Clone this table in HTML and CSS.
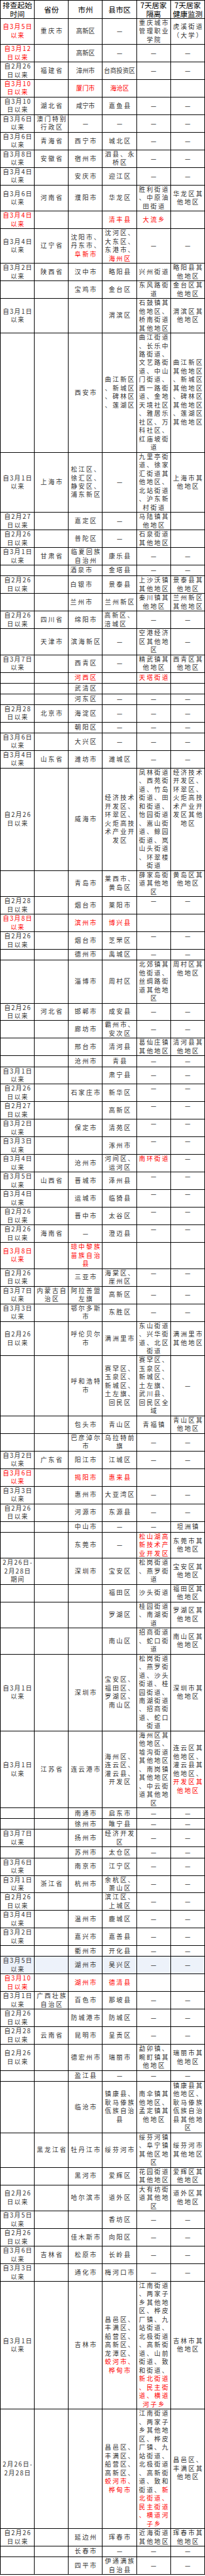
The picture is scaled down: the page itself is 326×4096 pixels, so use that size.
FILE: index.html
```html
<!DOCTYPE html>
<html lang="zh-CN">
<head>
<meta charset="utf-8">
<title>排查起始时间</title>
<link rel="stylesheet" href="styles.css">
</head>
<body>
<table class="sheet">
<colgroup><col><col><col><col><col><col></colgroup>
<thead>
<tr><th>排查起始<br>时间</th><th>省份</th><th>市州</th><th>县市区</th><th>7天居家<br>隔离</th><th>7天居家<br>健康监测</th></tr>
</thead>
<tbody>
<tr><td class="r">自3月5日<br>以来</td><td>重庆市</td><td class="t">高新区</td><td>—</td><td>重庆城市<br>管理职业<br>学院</td><td>虎溪街道<br>（大学）</td></tr>
<tr><td class="r">自3月12<br>日以来</td><td></td><td class="t">高新区</td><td>—</td><td>—</td><td>—</td></tr>
<tr><td>自2月26<br>日以来</td><td>福建省</td><td class="t">漳州市</td><td class="t">台商投资区</td><td>—</td><td>—</td></tr>
<tr><td class="r">自3月10<br>日以来</td><td></td><td class="t r">厦门市</td><td class="t r">海沧区</td><td></td><td></td></tr>
<tr><td>自3月10<br>日以来</td><td>湖北省</td><td class="t">咸宁市</td><td>嘉鱼县</td><td>—</td><td>—</td></tr>
<tr><td>自3月6日<br>以来</td><td>澳门特别<br>行政区</td><td>—</td><td>—</td><td>—</td><td>—</td></tr>
<tr><td>自3月6日<br>以来</td><td>青海省</td><td>西宁市</td><td>城北区</td><td>—</td><td>—</td></tr>
<tr><td>自3月8日<br>以来</td><td>安徽省</td><td>宿州市</td><td>泗县、永<br>桥区</td><td>—</td><td>—</td></tr>
<tr><td>自3月4日<br>以来</td><td></td><td>安庆市</td><td>迎江区</td><td>—</td><td>—</td></tr>
<tr><td>自3月6日<br>以来</td><td>河南省</td><td>濮阳市</td><td>华龙区</td><td>胜利街道<br>、中原油<br>田街道</td><td>华龙区其<br>他地区</td></tr>
<tr><td class="r">自3月4日<br>以来</td><td></td><td></td><td class="r">清丰县</td><td class="r">大流乡</td><td></td></tr>
<tr><td>自3月4日<br>以来</td><td>辽宁省</td><td>沈阳市、<br>丹东市、<br><span class="r">阜新市</span></td><td>沈河区、<br>大东区、<br>东港市、<br><span class="r">海州区</span></td><td>—</td><td>—</td></tr>
<tr><td>自3月2日<br>以来</td><td>陕西省</td><td>汉中市</td><td>略阳县</td><td>兴州街道</td><td>略阳县其<br>他地区</td></tr>
<tr><td></td><td></td><td>宝鸡市</td><td>金台区</td><td>东风路街<br>道</td><td>金台区其<br>他地区</td></tr>
<tr><td>自3月1日<br>以来</td><td></td><td></td><td>渭滨区</td><td>石鼓镇其<br>他地区、<br>桥南街道<br>其他地区</td><td>渭滨区其<br>他地区</td></tr>
<tr><td></td><td></td><td>西安市</td><td>曲江新区<br>、新城区<br>、碑林区<br>、莲湖区</td><td>曲江街道<br>、长乐中<br>路街道、<br>文艺路街<br>道、中山<br>门街道、<br>西一路街<br>道、金地<br>天境社区<br>、雅居乐<br>社区、万<br>科社区、<br>红庙坡街<br>道</td><td>曲江新区<br>其他地区<br>、新城区<br>其他地区<br>、碑林区<br>其他地区<br>、莲湖区<br>其他地区</td></tr>
<tr><td>自3月1日<br>以来</td><td>上海市</td><td>松江区、<br>徐汇区、<br>静安区、<br>浦东新区</td><td>—</td><td>九里亭街<br>道、徐家<br>汇街道其<br>他地区、<br>北站街道<br>、沪东新<br>村街道</td><td>上海市其<br>他地区</td></tr>
<tr><td>自2月27<br>日以来</td><td></td><td>嘉定区</td><td>—</td><td>马陆镇其<br>他地区</td><td></td></tr>
<tr><td>自2月26<br>日以来</td><td></td><td>普陀区</td><td>—</td><td>石泉街道<br>其他地区</td><td></td></tr>
<tr><td>自3月1日<br>以来</td><td>甘肃省</td><td>临夏回族<br>自治州</td><td>康乐县</td><td>—</td><td>—</td></tr>
<tr><td></td><td></td><td class="l">酒泉市</td><td>金塔县</td><td>—</td><td>—</td></tr>
<tr><td>自2月26<br>日以来</td><td></td><td class="l">白银市</td><td>景泰县</td><td>上沙沃镇<br>其他地区</td><td>景泰县其<br>他地区</td></tr>
<tr><td></td><td></td><td class="l">兰州市</td><td>兰州新区</td><td>秦川镇其<br>他地区</td><td>兰州新区<br>其他地区</td></tr>
<tr><td>自2月26<br>日以来</td><td>四川省</td><td>绵阳市</td><td class="l">高新区、<br>涪城区</td><td>—</td><td>—</td></tr>
<tr><td></td><td>天津市</td><td>滨海新区</td><td>—</td><td>空港经济<br>区其他地<br>区</td><td>—</td></tr>
<tr><td>自3月7日<br>以来</td><td></td><td>西青区</td><td>—</td><td>精武镇其<br>他地区</td><td>西青区其<br>他地区</td></tr>
<tr><td></td><td></td><td class="r">河西区</td><td></td><td class="r">天塔街道</td><td></td></tr>
<tr><td></td><td></td><td>武清区</td><td></td><td></td><td></td></tr>
<tr><td></td><td></td><td>河东区</td><td>—</td><td>—</td><td>—</td></tr>
<tr><td>自2月28<br>日以来</td><td>北京市</td><td>海淀区</td><td>—</td><td>—</td><td>—</td></tr>
<tr><td></td><td></td><td>朝阳区</td><td>—</td><td>—</td><td>—</td></tr>
<tr><td>自3月6日<br>以来</td><td></td><td>大兴区</td><td>—</td><td>—</td><td>—</td></tr>
<tr><td>自3月4日<br>以来</td><td>山东省</td><td>潍坊市</td><td>潍城区</td><td>—</td><td>—</td></tr>
<tr><td>自2月26<br>日以来</td><td></td><td>威海市</td><td>经济技术<br>开发区、<br>环翠区、<br>火炬高技<br>术产业开<br>发区</td><td>凤林街道<br>、西苑街<br>道、竹岛<br>街道、田<br>和街道、<br>怡园街道<br>、嵩山街<br>道、鲸园<br>街道、岚<br>山头街道<br>、环翠楼<br>街道</td><td class="v">经济技术<br>开发区、<br>环翠区、<br>火炬高技<br>术产业开<br>发区其他<br>地区</td></tr>
<tr><td></td><td></td><td>青岛市</td><td>莱西市、<br>黄岛区</td><td>薛家岛街<br>道其他地<br>区</td><td class="v">黄岛区其<br>他地区</td></tr>
<tr><td>自2月28<br>日以来</td><td></td><td>烟台市</td><td>莱阳市</td><td class="v">—</td><td class="v">—</td></tr>
<tr><td class="r">自3月8日<br>以来</td><td></td><td class="r">滨州市</td><td class="r">博兴县</td><td></td><td></td></tr>
<tr><td>自2月26<br>日以来</td><td></td><td>烟台市</td><td>芝罘区</td><td class="v">—</td><td class="v">—</td></tr>
<tr><td></td><td></td><td>德州市</td><td>禹城区</td><td>—</td><td>—</td></tr>
<tr><td></td><td></td><td>淄博市</td><td>周村区</td><td>北郊镇其<br>他街道、<br>丝绸路街<br>道其他地<br>区</td><td class="v">周村区其<br>他地区</td></tr>
<tr><td>自2月26<br>日以来</td><td>河北省</td><td>邯郸市</td><td>成安县</td><td>—</td><td>—</td></tr>
<tr><td></td><td></td><td>廊坊市</td><td>霸州市、<br>安次区</td><td>—</td><td>—</td></tr>
<tr><td></td><td></td><td>邢台市</td><td>清河县</td><td>葛仙庄镇<br>其他地区</td><td>清河县其<br>他地区</td></tr>
<tr><td></td><td></td><td>沧州市</td><td>青县</td><td>—</td><td>—</td></tr>
<tr><td>自3月1日<br>以来</td><td></td><td></td><td>肃宁县</td><td>—</td><td>—</td></tr>
<tr><td>自2月26<br>日以来</td><td></td><td>石家庄市</td><td>新华区</td><td class="v">—</td><td class="v">—</td></tr>
<tr><td>自2月27<br>日以来</td><td></td><td></td><td>高新区</td><td class="v">—</td><td class="v">—</td></tr>
<tr><td>自3月2日<br>以来</td><td></td><td>保定市</td><td>清苑区</td><td class="v">—</td><td class="v">—</td></tr>
<tr><td>自3月3日<br>以来</td><td></td><td></td><td>涿州市</td><td class="v">—</td><td class="v">—</td></tr>
<tr><td>自3月4日<br>以来</td><td></td><td>沧州市</td><td>河间区、<br>运河区</td><td class="v r">南环街道</td><td class="v">—</td></tr>
<tr><td>自3月5日<br>以来</td><td>山西省</td><td>晋城市</td><td>泽州县</td><td class="v">—</td><td class="v">—</td></tr>
<tr><td>自3月4日<br>以来</td><td></td><td>运城市</td><td>临猗县</td><td class="v">—</td><td class="v">—</td></tr>
<tr><td>自2月26<br>日以来</td><td></td><td>晋中市</td><td>太谷区</td><td class="v">—</td><td class="v">—</td></tr>
<tr><td>自2月26<br>日以来</td><td>海南省</td><td>—</td><td>澄迈县</td><td class="v">—</td><td class="v">—</td></tr>
<tr><td class="r">自3月8日<br>以来</td><td></td><td class="r">琼中黎族<br>苗族自治<br>县</td><td></td><td></td><td></td></tr>
<tr><td>自2月26<br>日以来</td><td></td><td>三亚市</td><td>海棠区、<br>崖州区</td><td class="v">—</td><td class="v">—</td></tr>
<tr><td>自3月7日<br>以来</td><td>内蒙古自<br>治区</td><td>阿拉善盟<br>左旗</td><td>高新区</td><td>—</td><td>—</td></tr>
<tr><td>自3月3日<br>以来</td><td></td><td>鄂尔多斯<br>市</td><td>东胜区</td><td>—</td><td>—</td></tr>
<tr><td>自2月26<br>日以来</td><td></td><td>呼伦贝尔<br>市</td><td>满洲里市</td><td>东山街道<br>、兴华街<br>道、北区<br>街道</td><td>满洲里市<br>其他地区</td></tr>
<tr><td></td><td></td><td>呼和浩特<br>市</td><td>赛罕区、<br>玉泉区、<br>新城区、<br>土左旗、<br>回民区</td><td>赛罕区、<br>玉泉区、<br>新城区、<br>土左旗、<br>武川县、<br>回民区全<br>域</td><td>—</td></tr>
<tr><td></td><td></td><td>包头市</td><td>青山区</td><td>青福镇</td><td>青山区其<br>他地区</td></tr>
<tr><td></td><td></td><td>巴彦淖尔<br>市</td><td>乌拉特前<br>旗</td><td>—</td><td>—</td></tr>
<tr><td>自3月2日<br>以来</td><td>广东省</td><td>阳江市</td><td>江城区</td><td>—</td><td>—</td></tr>
<tr><td class="r">自3月6日<br>以来</td><td></td><td class="r">揭阳市</td><td class="r">惠来县</td><td></td><td></td></tr>
<tr><td>自3月3日<br>以来</td><td></td><td>惠州市</td><td>大亚湾区</td><td>—</td><td>—</td></tr>
<tr><td>自2月26<br>日以来</td><td></td><td>河源市</td><td>东源县</td><td>—</td><td>—</td></tr>
<tr><td></td><td></td><td>中山市</td><td>—</td><td>—</td><td>坦洲镇</td></tr>
<tr><td></td><td></td><td>东莞市</td><td>—</td><td class="r">松山湖高<br>新技术产<br>业开发区</td><td>东莞市其<br>他地区</td></tr>
<tr><td>2月26日-<br>2月28日<br>期间</td><td></td><td>深圳市</td><td>宝安区</td><td>松岗街道<br>、燕罗街<br>道</td><td>宝安区其<br>他地区</td></tr>
<tr><td></td><td></td><td></td><td>福田区</td><td>沙头街道</td><td>福田区其<br>他地区</td></tr>
<tr><td></td><td></td><td></td><td>罗湖区</td><td>桂园街道<br>、南湖街<br>道</td><td>罗湖区其<br>他地区</td></tr>
<tr><td></td><td></td><td></td><td>南山区</td><td>招商街道<br>、蛇口街<br>道</td><td>南山区其<br>他地区</td></tr>
<tr><td>自3月1日<br>以来</td><td></td><td>深圳市</td><td>宝安区、<br>福田区、<br>罗湖区、<br>南山区</td><td>松岗街道<br>、燕罗街<br>道、沙头<br>街道、桂<br>园街道、<br>南湖街道<br>、招商街<br>道、蛇口<br>街道</td><td>深圳市其<br>他地区</td></tr>
<tr><td>自3月1日<br>以来</td><td>江苏省</td><td>连云港市</td><td>海州区、<br>连云区、<br>灌云县、<br>开发区</td><td>海州区其<br>他地区、<br>墟沟街道<br>其他地区<br>、南岗镇<br>其他地区<br>、中云街<br>道其他地<br>区</td><td>连云区其<br>他地区、<br>灌云县其<br>他地区、<br><span class="r">开发区其<br>他地区</span></td></tr>
<tr><td></td><td></td><td>南通市</td><td>启东市</td><td>—</td><td>—</td></tr>
<tr><td></td><td></td><td>徐州市</td><td>睢宁县</td><td>—</td><td>—</td></tr>
<tr><td>自3月7日<br>以来</td><td></td><td>扬州市</td><td>经济开发<br>区</td><td>—</td><td>—</td></tr>
<tr><td></td><td></td><td>苏州市</td><td>太仓区</td><td>—</td><td>—</td></tr>
<tr><td>自3月6日<br>以来</td><td></td><td>南京市</td><td>江宁区</td><td>—</td><td>—</td></tr>
<tr><td>自3月1日<br>以来</td><td>浙江省</td><td>杭州市</td><td>余杭区、<br>萧山区</td><td>—</td><td>—</td></tr>
<tr><td>自2月26<br>日以来</td><td></td><td></td><td>滨江区、<br>上城区</td><td>—</td><td>—</td></tr>
<tr><td>自3月4日<br>以来</td><td></td><td>温州市</td><td>鹿城区</td><td>—</td><td>—</td></tr>
<tr><td>自3月2日<br>以来</td><td></td><td>嘉兴市</td><td>嘉善县</td><td>—</td><td>—</td></tr>
<tr><td></td><td></td><td>衢州市</td><td>开化县</td><td>—</td><td>—</td></tr>
<tr class="hl"><td>自3月5日<br>以来</td><td></td><td>湖州市</td><td>吴兴区</td><td>—</td><td>—</td></tr>
<tr><td class="r">自3月10<br>日以来</td><td></td><td class="r">湖州市</td><td class="r">德清县</td><td></td><td></td></tr>
<tr><td>自3月1日<br>以来</td><td>广西壮族<br>自治区</td><td>百色市</td><td>那坡县</td><td>—</td><td>—</td></tr>
<tr><td>自2月26<br>日以来</td><td></td><td>防城港市</td><td>防城区</td><td>—</td><td>—</td></tr>
<tr><td>自2月28<br>日以来</td><td>云南省</td><td>昆明市</td><td>呈贡区</td><td>—</td><td>—</td></tr>
<tr><td>自2月26<br>日以来</td><td></td><td>德宏州市</td><td>瑞丽市</td><td>勐卯镇、<br>畹町镇其<br>他地区</td><td>瑞丽市其<br>他地区</td></tr>
<tr><td></td><td></td><td>盈江县</td><td>—</td><td>—</td><td>—</td></tr>
<tr><td></td><td></td><td>临沧市</td><td>镇康县、<br>耿马傣族<br>佤族自治<br>县</td><td>南伞镇其<br>他地区、<br>孟定镇其<br>他地区</td><td>镇康县其<br>他地区、<br>耿马傣族<br>佤族自治<br>县其他地<br>区</td></tr>
<tr><td></td><td>黑龙江省</td><td>牡丹江市</td><td>绥芬河市</td><td>绥芬河镇<br>、阜宁镇<br>其他区地<br>区</td><td>绥芬河市<br>其他地区</td></tr>
<tr><td></td><td></td><td>黑河市</td><td>爱辉区</td><td>花园街道<br>其他地区</td><td>爱辉区其<br>他地区</td></tr>
<tr><td>自2月26<br>日以来</td><td></td><td>哈尔滨市</td><td>道外区</td><td>大有坊街<br>道其他地<br>区</td><td>道外区其<br>他地区</td></tr>
<tr><td>自3月5日<br>以来</td><td></td><td></td><td>香坊区</td><td>—</td><td>—</td></tr>
<tr><td>自2月26<br>日以来</td><td></td><td>佳木斯市</td><td>向阳区</td><td>—</td><td>—</td></tr>
<tr><td>自3月6日<br>以来</td><td>吉林省</td><td>松原市</td><td>长岭县</td><td>—</td><td>—</td></tr>
<tr><td>自3月3日<br>以来</td><td></td><td>通化市</td><td>梅河口市</td><td>—</td><td>—</td></tr>
<tr><td>自3月1日<br>以来</td><td></td><td>吉林市</td><td>昌邑区、<br>丰满区、<br>船营区、<br>高新区、<br>龙潭区、<br><span class="r">蛟河市、<br>桦甸市</span></td><td>江南街道<br>、两家子<br>乡其他地<br>区、桦皮<br>厂镇、九<br>站街道、<br>北极街道<br>、高新街<br>道、山前<br>街道、致<br>和街道、<br><span class="r">新北街道<br>、民主街<br>道、横道<br>河子乡</span></td><td>吉林市其<br>他地区</td></tr>
<tr><td>2月26日-<br>2月28日</td><td></td><td></td><td>昌邑区、<br>丰满区、<br>船营区、<br>高新区、<br><span class="r">蛟河市、<br>桦甸市</span></td><td>江南街道<br>、两家子<br>乡其他地<br>区、桦皮<br>厂镇、九<br>站街道、<br>北极街道<br>、高新街<br>道、致和<br>街道、<span class="r">新<br>北街道、<br>民主街道<br>、横道河<br>子乡</span></td><td>昌邑区、<br>丰满区其<br>他地区</td></tr>
<tr><td>自2月26<br>日以来</td><td></td><td>延边州</td><td>珲春市</td><td>近海街道<br>其他地区</td><td>珲春市其<br>他地区</td></tr>
<tr><td></td><td></td><td>长春市</td><td>—</td><td>—</td><td>—</td></tr>
<tr><td></td><td></td><td>四平市</td><td>伊通满族<br>自治县</td><td>—</td><td>—</td></tr>
</tbody>
</table>
</body>
</html>
```

FILE: styles.css
```css
html, body {
  margin: 0;
  padding: 0;
  background: #fff;
}

.sheet {
  border-collapse: collapse;
  table-layout: fixed;
  width: 326px;
  font-family: "Noto Sans CJK SC", "Noto Sans", sans-serif;
  font-size: 9.9px;
  line-height: 13.48px;
  color: #333;
}

.sheet col {
  width: 16.666%;
}

.sheet tr {
  height: 17.1px;
}

.sheet th,
.sheet td {
  border: 1px solid #000;
  padding: 0 0 0 2.3px;
  text-align: center;
  vertical-align: middle;
  white-space: nowrap;
  letter-spacing: 2.3px;
  overflow: hidden;
}

.sheet th {
  font-weight: normal;
  color: #000;
  font-size: 11.8px;
  line-height: 13.8px;
  letter-spacing: 0;
  padding: 0;
}

.sheet td:first-child {
  letter-spacing: 1.4px;
  padding-left: 1.4px;
}

.sheet .t {
  letter-spacing: 0;
  padding-left: 0;
}

.sheet .l {
  text-align: left;
  padding-left: 2.5px;
}

.sheet .v {
  vertical-align: top;
}

.r {
  color: #f00;
}

.sheet .hl td {
  background: #edf2fa;
}
```
